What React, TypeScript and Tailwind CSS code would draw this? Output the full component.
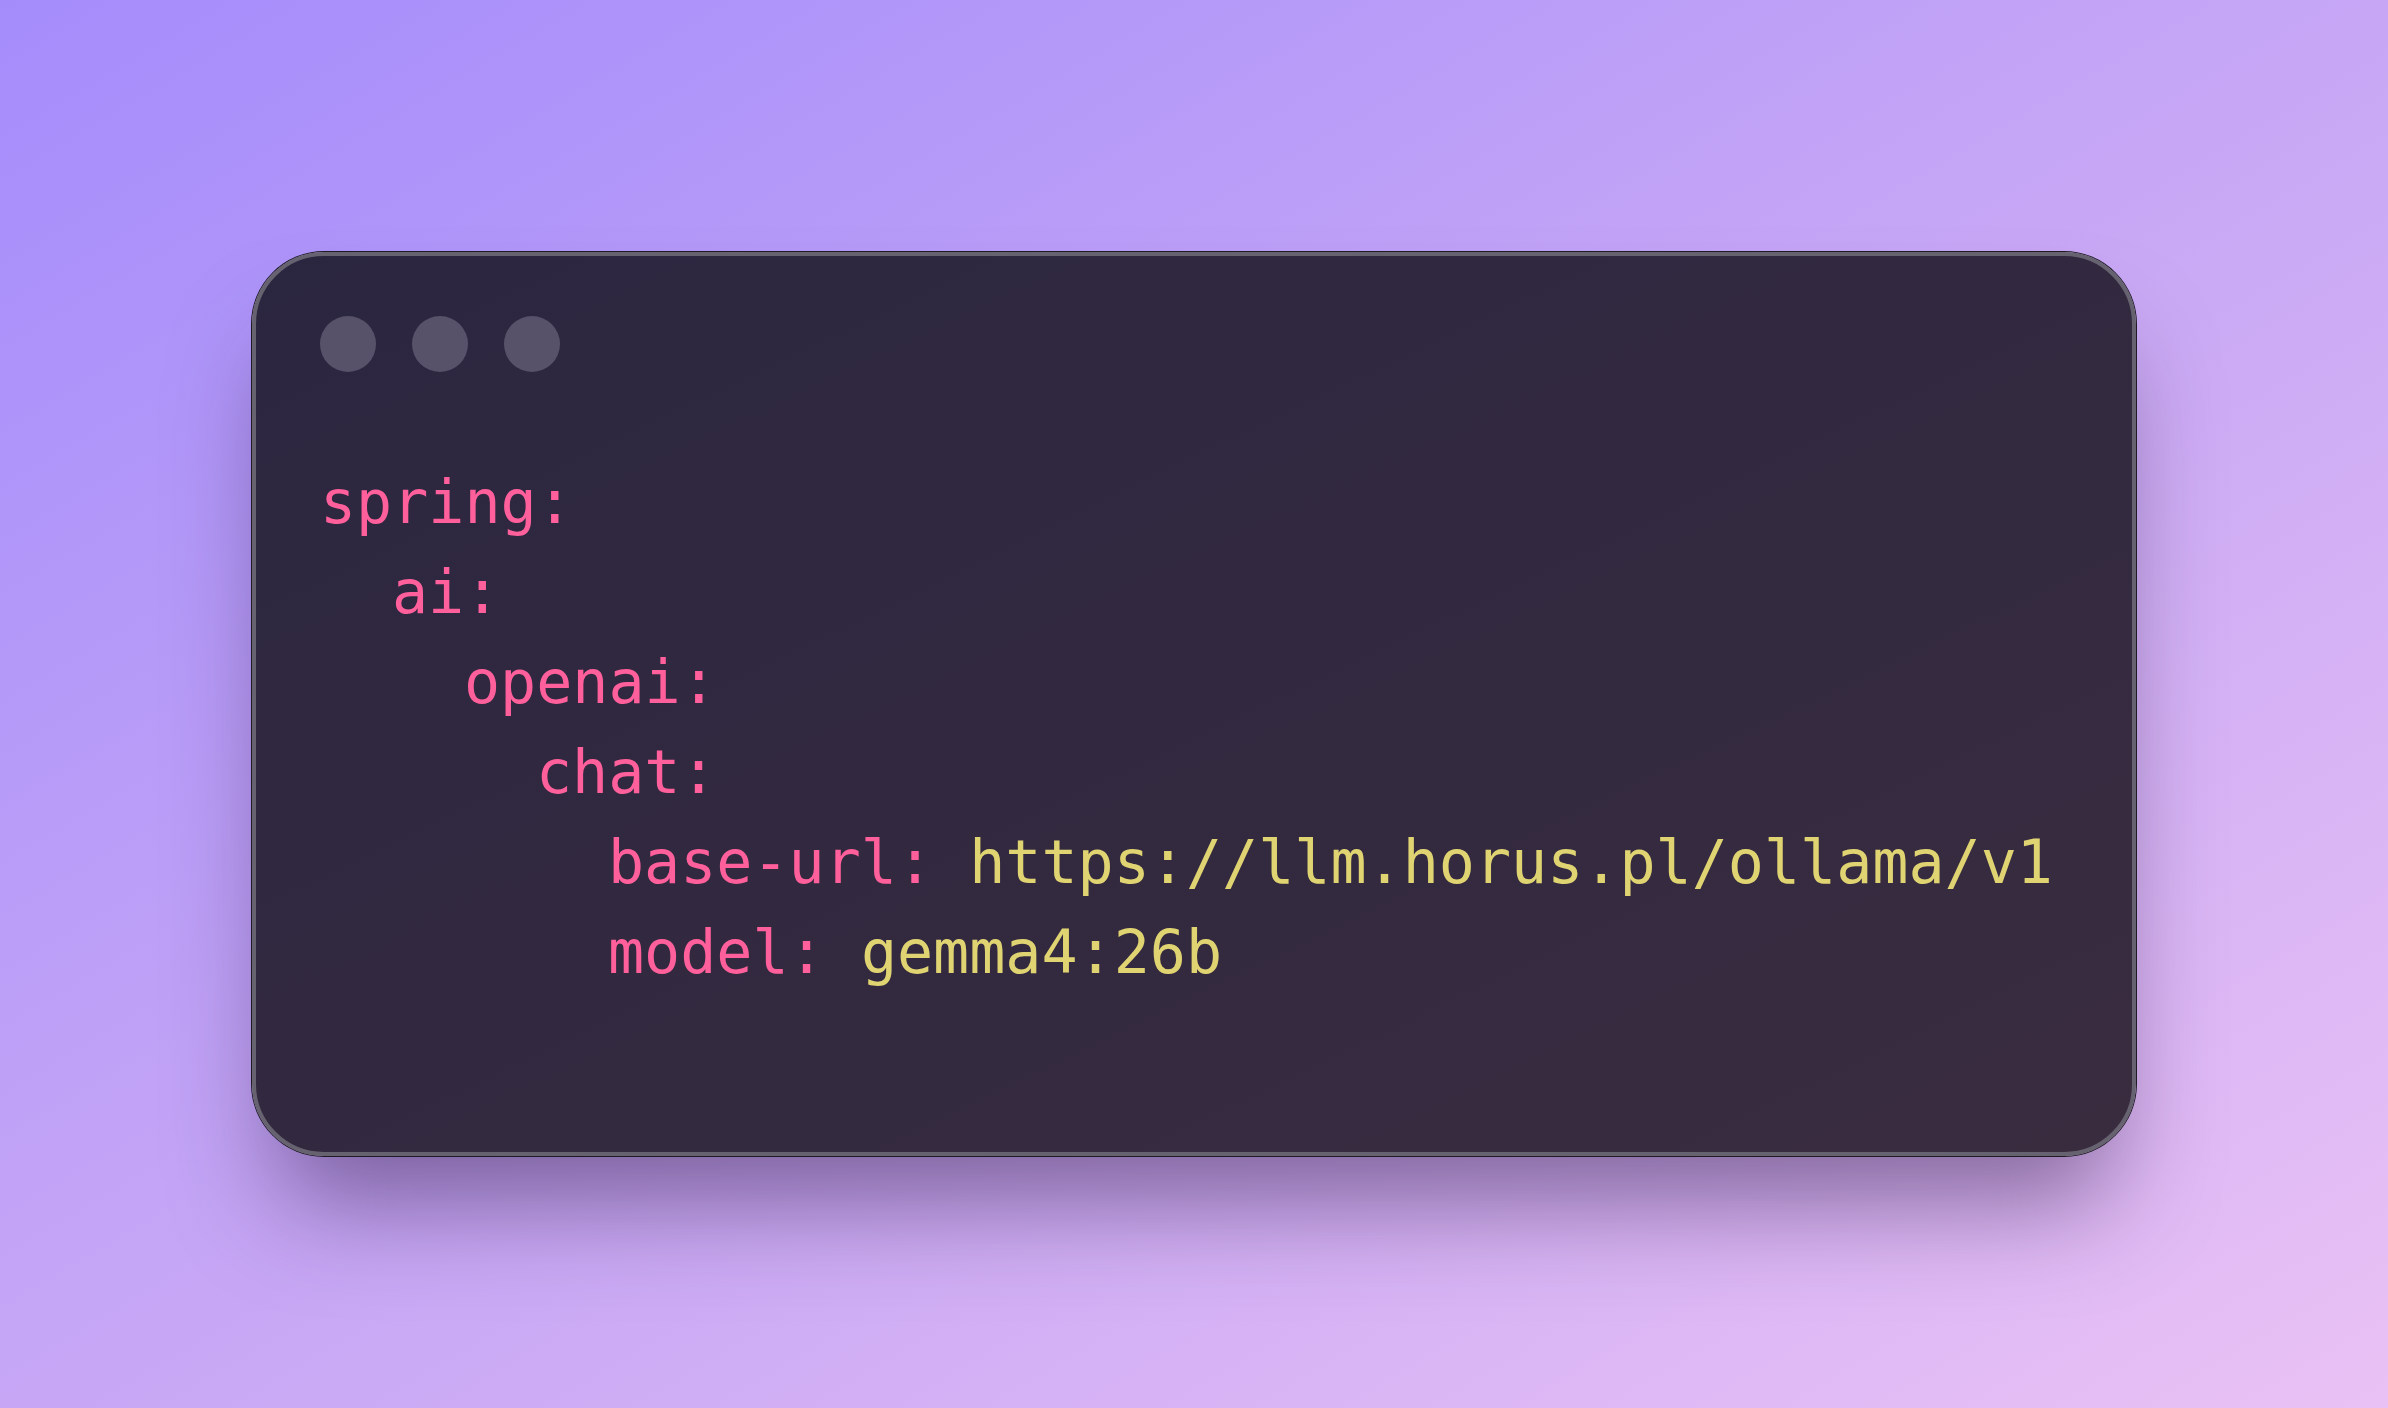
const lines: { indent: number; key: string; value?: string }[] = [
  { indent: 0, key: "spring:" },
  { indent: 1, key: "ai:" },
  { indent: 2, key: "openai:" },
  { indent: 3, key: "chat:" },
  { indent: 4, key: "base-url:", value: "https://llm.horus.pl/ollama/v1" },
  { indent: 4, key: "model:", value: "gemma4:26b" },
];

const indentClass = ["pl-0", "pl-[72px]", "pl-[144px]", "pl-[216px]", "pl-[288px]"];

export default function App() {
  return (
    <div className="w-full h-[1408px] flex items-center justify-center bg-linear-to-br from-[#a48cfb] via-[#c6a6f5] to-[#e9c1f4]">
      <div className="w-[1884px] h-[904px] rounded-[72px] border-4 border-[#67626f] ring-1 ring-[#1e1b25] bg-linear-to-br from-[#2b2640] to-[#392c3f] shadow-[0_70px_100px_-25px_rgba(45,25,70,0.5)] pl-16 pt-[60px] flex flex-col">
        <div className="flex gap-9">
          <span className="w-14 h-14 rounded-full bg-[#57516a]" />
          <span className="w-14 h-14 rounded-full bg-[#57516a]" />
          <span className="w-14 h-14 rounded-full bg-[#57516a]" />
        </div>

        <pre className="mt-[85px] text-[60px] leading-[90px] font-['DejaVu_Sans_Mono',monospace] whitespace-pre">
          {lines.map((l, i) => (
            <div key={i} className={indentClass[l.indent]}>
              <span className="text-[#ff5f9b]">{l.key}</span>
              {l.value && <span className="text-[#e0d472]"> {l.value}</span>}
            </div>
          ))}
        </pre>
      </div>
    </div>
  );
}
